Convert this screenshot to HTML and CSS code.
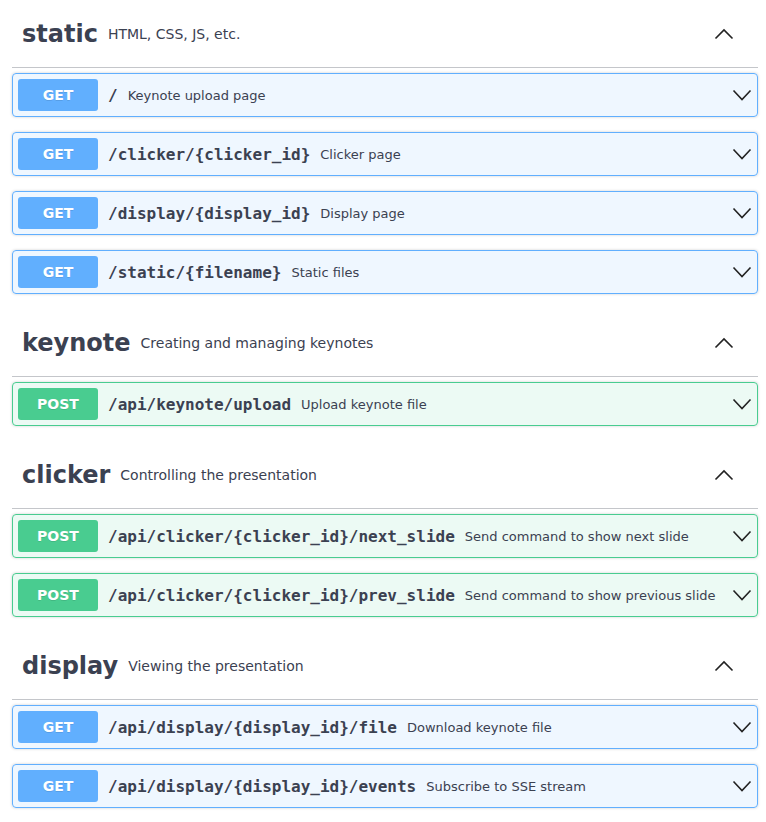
FILE: index.html
```html
<!DOCTYPE html>
<html>
<head>
<meta charset="utf-8">
<link rel="stylesheet" href="styles.css">
</head>
<body>
<div class="page">
  <section class="tag-section">
    <h3 class="tag"><span class="tag-name">static</span><small class="tag-desc">HTML, CSS, JS, etc.</small>
      <svg class="arrow-up" width="20" height="20" viewBox="0 0 20 20"><polyline points="1.5,14.5 10,6 18.5,14.5"/></svg></h3>
    <div class="op get"><span class="method">GET</span><span class="path">/</span><span class="desc">Keynote upload page</span><svg class="arrow-down" width="20" height="20" viewBox="0 0 20 20"><polyline points="1.5,5.5 10,14.5 18.5,5.5"/></svg></div>
    <div class="op get"><span class="method">GET</span><span class="path">/clicker/{clicker_id}</span><span class="desc">Clicker page</span><svg class="arrow-down" width="20" height="20" viewBox="0 0 20 20"><polyline points="1.5,5.5 10,14.5 18.5,5.5"/></svg></div>
    <div class="op get"><span class="method">GET</span><span class="path">/display/{display_id}</span><span class="desc">Display page</span><svg class="arrow-down" width="20" height="20" viewBox="0 0 20 20"><polyline points="1.5,5.5 10,14.5 18.5,5.5"/></svg></div>
    <div class="op get"><span class="method">GET</span><span class="path">/static/{filename}</span><span class="desc">Static files</span><svg class="arrow-down" width="20" height="20" viewBox="0 0 20 20"><polyline points="1.5,5.5 10,14.5 18.5,5.5"/></svg></div>
  </section>
  <section class="tag-section">
    <h3 class="tag"><span class="tag-name">keynote</span><small class="tag-desc">Creating and managing keynotes</small>
      <svg class="arrow-up" width="20" height="20" viewBox="0 0 20 20"><polyline points="1.5,14.5 10,6 18.5,14.5"/></svg></h3>
    <div class="op post"><span class="method">POST</span><span class="path">/api/keynote/upload</span><span class="desc">Upload keynote file</span><svg class="arrow-down" width="20" height="20" viewBox="0 0 20 20"><polyline points="1.5,5.5 10,14.5 18.5,5.5"/></svg></div>
  </section>
  <section class="tag-section">
    <h3 class="tag"><span class="tag-name">clicker</span><small class="tag-desc">Controlling the presentation</small>
      <svg class="arrow-up" width="20" height="20" viewBox="0 0 20 20"><polyline points="1.5,14.5 10,6 18.5,14.5"/></svg></h3>
    <div class="op post"><span class="method">POST</span><span class="path">/api/clicker/{clicker_id}/next_slide</span><span class="desc">Send command to show next slide</span><svg class="arrow-down" width="20" height="20" viewBox="0 0 20 20"><polyline points="1.5,5.5 10,14.5 18.5,5.5"/></svg></div>
    <div class="op post"><span class="method">POST</span><span class="path">/api/clicker/{clicker_id}/prev_slide</span><span class="desc">Send command to show previous slide</span><svg class="arrow-down" width="20" height="20" viewBox="0 0 20 20"><polyline points="1.5,5.5 10,14.5 18.5,5.5"/></svg></div>
  </section>
  <section class="tag-section">
    <h3 class="tag"><span class="tag-name">display</span><small class="tag-desc">Viewing the presentation</small>
      <svg class="arrow-up" width="20" height="20" viewBox="0 0 20 20"><polyline points="1.5,14.5 10,6 18.5,14.5"/></svg></h3>
    <div class="op get"><span class="method">GET</span><span class="path">/api/display/{display_id}/file</span><span class="desc">Download keynote file</span><svg class="arrow-down" width="20" height="20" viewBox="0 0 20 20"><polyline points="1.5,5.5 10,14.5 18.5,5.5"/></svg></div>
    <div class="op get"><span class="method">GET</span><span class="path">/api/display/{display_id}/events</span><span class="desc">Subscribe to SSE stream</span><svg class="arrow-down" width="20" height="20" viewBox="0 0 20 20"><polyline points="1.5,5.5 10,14.5 18.5,5.5"/></svg></div>
  </section>
</div>
</body>
</html>
```
FILE: styles.css
```css
html, body {
  margin: 0;
  padding: 0;
  background: #fff;
}
body {
  font-family: "DejaVu Sans", sans-serif;
  color: #3b4151;
}
.page {
  padding: 0 8px 0 12px;
}
.tag-section + .tag-section {
  margin-top: 1px;
}
.tag {
  display: flex;
  align-items: center;
  box-sizing: border-box;
  height: 68px;
  margin: 0 0 5px;
  padding: 10px 24px 10px 10px;
  border-bottom: 1px solid rgba(59, 65, 81, 0.3);
  font-size: 24px;
  font-weight: 700;
  color: #3b4151;
}
.tag-desc {
  flex: 1;
  padding: 0 10px;
  font-size: 14px;
  font-weight: 400;
  color: #3b4151;
}
.arrow-up, .arrow-down {
  flex: none;
  fill: none;
  stroke: #222;
  stroke-width: 1.6;
}
.op {
  display: flex;
  align-items: center;
  height: 44px;
  box-sizing: border-box;
  margin: 0 0 15px;
  padding: 5px;
  border: 1px solid #61affe;
  border-radius: 4px;
  background: rgba(97, 175, 254, 0.1);
  box-shadow: 0 0 3px rgba(0, 0, 0, 0.19);
}
.op.post {
  border-color: #49cc90;
  background: rgba(73, 204, 144, 0.1);
}
.method {
  flex: none;
  width: 80px;
  height: 32px;
  line-height: 32px;
  text-align: center;
  border-radius: 3px;
  background: #61affe;
  color: #fff;
  font-size: 14px;
  font-weight: 700;
  text-shadow: 0 1px 0 rgba(0, 0, 0, 0.1);
}
.post .method {
  background: #49cc90;
}
.path {
  padding: 0 10px;
  font-family: "DejaVu Sans Mono", monospace;
  font-size: 16px;
  font-weight: 700;
  color: #3b4151;
  white-space: nowrap;
}
.desc {
  flex: 1;
  font-size: 13px;
  color: #3b4151;
  white-space: nowrap;
}
```
